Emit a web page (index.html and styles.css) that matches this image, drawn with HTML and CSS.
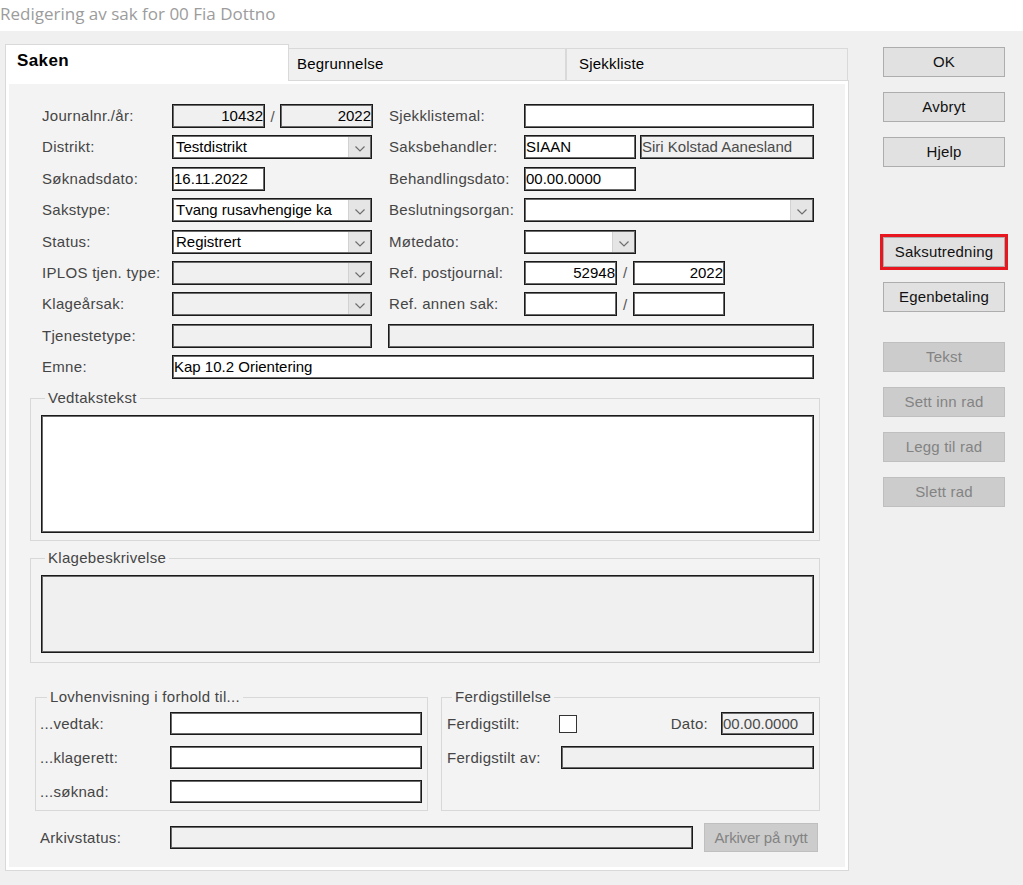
FILE: index.html
```html
<!DOCTYPE html>
<html>
<head>
<meta charset="utf-8">
<link rel="stylesheet" href="styles.css">
</head>
<body>
<div class="titlebar">Redigering av sak for 00 Fia Dottno</div>
<div class="window">
  <div class="tabctl">
    <div class="tabstrip">
      <div class="tab active">Saken</div>
      <div class="tab t2">Begrunnelse</div>
      <div class="tab t3">Sjekkliste</div>
    </div>
    <div class="panel">
      <div class="page">
        <div class="form">
          <div class="lbl">Journalnr./år:</div>
          <div class="cell"><div class="tb ro num w93">10432</div><span class="slash">/</span><div class="tb ro num w93">2022</div></div>
          <div class="lbl lbl2">Sjekklistemal:</div>
          <div class="cell"><div class="tb grow"></div></div>

          <div class="lbl">Distrikt:</div>
          <div class="cell"><div class="cb grow"><div class="v">Testdistrikt</div><div class="arr"><svg width="10" height="6" viewBox="0 0 10 6"><polyline points="0.5,0.5 5,5 9.5,0.5" fill="none" stroke="#6e6e6e" stroke-width="1.2"/></svg></div></div></div>
          <div class="lbl lbl2">Saksbehandler:</div>
          <div class="cell"><div class="tb w112">SIAAN</div><div class="tb ro grow gapl dim">Siri Kolstad Aanesland</div></div>

          <div class="lbl">Søknadsdato:</div>
          <div class="cell"><div class="tb w93">16.11.2022</div></div>
          <div class="lbl lbl2">Behandlingsdato:</div>
          <div class="cell"><div class="tb w112">00.00.0000</div></div>

          <div class="lbl">Sakstype:</div>
          <div class="cell"><div class="cb grow"><div class="v">Tvang rusavhengige ka</div><div class="arr"><svg width="10" height="6" viewBox="0 0 10 6"><polyline points="0.5,0.5 5,5 9.5,0.5" fill="none" stroke="#6e6e6e" stroke-width="1.2"/></svg></div></div></div>
          <div class="lbl lbl2">Beslutningsorgan:</div>
          <div class="cell"><div class="cb grow"><div class="v"></div><div class="arr"><svg width="10" height="6" viewBox="0 0 10 6"><polyline points="0.5,0.5 5,5 9.5,0.5" fill="none" stroke="#6e6e6e" stroke-width="1.2"/></svg></div></div></div>

          <div class="lbl">Status:</div>
          <div class="cell"><div class="cb grow"><div class="v">Registrert</div><div class="arr"><svg width="10" height="6" viewBox="0 0 10 6"><polyline points="0.5,0.5 5,5 9.5,0.5" fill="none" stroke="#6e6e6e" stroke-width="1.2"/></svg></div></div></div>
          <div class="lbl lbl2">Møtedato:</div>
          <div class="cell"><div class="cb w112"><div class="v"></div><div class="arr"><svg width="10" height="6" viewBox="0 0 10 6"><polyline points="0.5,0.5 5,5 9.5,0.5" fill="none" stroke="#6e6e6e" stroke-width="1.2"/></svg></div></div></div>

          <div class="lbl">IPLOS tjen. type:</div>
          <div class="cell"><div class="cb ro grow"><div class="v"></div><div class="arr"><svg width="10" height="6" viewBox="0 0 10 6"><polyline points="0.5,0.5 5,5 9.5,0.5" fill="none" stroke="#6e6e6e" stroke-width="1.2"/></svg></div></div></div>
          <div class="lbl lbl2">Ref. postjournal:</div>
          <div class="cell"><div class="tb num w93">52948</div><span class="slash s16">/</span><div class="tb num w92">2022</div></div>

          <div class="lbl">Klageårsak:</div>
          <div class="cell"><div class="cb ro grow"><div class="v"></div><div class="arr"><svg width="10" height="6" viewBox="0 0 10 6"><polyline points="0.5,0.5 5,5 9.5,0.5" fill="none" stroke="#6e6e6e" stroke-width="1.2"/></svg></div></div></div>
          <div class="lbl lbl2">Ref. annen sak:</div>
          <div class="cell"><div class="tb w93"></div><span class="slash s16">/</span><div class="tb w92"></div></div>

          <div class="lbl">Tjenestetype:</div>
          <div class="cell"><div class="tb ro grow"></div></div>
          <div class="cell span2"><div class="tb ro grow"></div></div>

          <div class="lbl">Emne:</div>
          <div class="cell span3"><div class="tb grow">Kap 10.2 Orientering</div></div>
        </div>

        <fieldset class="fs fs-ved">
          <legend class="lg-ved">Vedtakstekst</legend>
          <div class="tb area h118"></div>
        </fieldset>

        <fieldset class="fs fs-klage">
          <legend class="lg-ved">Klagebeskrivelse</legend>
          <div class="tb ro area h78"></div>
        </fieldset>

        <div class="bottom">
          <fieldset class="fs fs-lov">
            <legend class="lg-lov">Lovhenvisning i forhold til...</legend>
            <div class="lrow"><div class="lbl l130">...vedtak:</div><div class="tb h23 w252"></div></div>
            <div class="lrow"><div class="lbl l130">...klagerett:</div><div class="tb h23 w252"></div></div>
            <div class="lrow"><div class="lbl l130">...søknad:</div><div class="tb h23 w252"></div></div>
          </fieldset>
          <fieldset class="fs fs-ferd">
            <legend class="lg-ferd">Ferdigstillelse</legend>
            <div class="lrow">
              <div class="lbl l112">Ferdigstilt:</div>
              <div class="chk"></div>
              <div class="lbl dato">Dato:</div>
              <div class="tb ro h23 w93 dim">00.00.0000</div>
            </div>
            <div class="lrow">
              <div class="lbl l114">Ferdigstilt av:</div>
              <div class="tb ro h23 grow"></div>
            </div>
          </fieldset>
        </div>

        <div class="arow">
          <div class="lbl l130">Arkivstatus:</div>
          <div class="tb ro h23 w523"></div>
          <div class="btn dis arkiv">Arkiver på nytt</div>
        </div>
      </div>
    </div>
  </div>

  <div class="side">
    <div class="btn">OK</div>
    <div class="btn mt15">Avbryt</div>
    <div class="btn mt15">Hjelp</div>
    <div class="btn mt70 hl">Saksutredning</div>
    <div class="btn mt15">Egenbetaling</div>
    <div class="btn dis mt30">Tekst</div>
    <div class="btn dis mt15">Sett inn rad</div>
    <div class="btn dis mt15">Legg til rad</div>
    <div class="btn dis mt15">Slett rad</div>
  </div>
</div>
</body>
</html>
```

FILE: styles.css
```css
* { box-sizing: border-box; }

body {
  margin: 0;
  width: 1023px;
  height: 885px;
  overflow: hidden;
  background: #f0f0f0;
  font-family: "Liberation Sans", Arial, sans-serif;
  font-size: 15px;
  color: #000;
}

.titlebar {
  height: 31px;
  background: #fff;
  color: #9c9c9c;
  font-family: "Open Sans", "Noto Sans", sans-serif;
  font-size: 17px;
  line-height: 28px;
  padding-left: 0;
  white-space: nowrap;
}

.window {
  display: flex;
  padding: 13px 0 0 5px;
}

.tabctl { width: 844px; }

.tabstrip {
  display: flex;
  align-items: flex-end;
  height: 36px;
  position: relative;
  z-index: 1;
}

.tab {
  height: 32px;
  border: 1px solid #d9d9d9;
  border-bottom: none;
  background: #f0f0f0;
  line-height: 30px;
  padding-left: 8px;
  letter-spacing: 0.2px;
  white-space: nowrap;
}
.tab.active {
  width: 284px;
  height: 37px;
  margin-bottom: -1px;
  background: #fff;
  font-weight: bold;
  font-size: 17px;
  line-height: 32px;
  padding-left: 11px;
  letter-spacing: 0.4px;
}
.tab.t2 { width: 277px; border-left: none; }
.tab.t3 { width: 282px; padding-left: 12px; }

.panel {
  height: 791px;
  border: 1px solid #d9d9d9;
  background: #fff;
  padding: 3px;
}

.page {
  height: 100%;
  background: #f3f3f3;
  padding: 20px 0 0 21px;
}

.form {
  margin-left: 12px;
  display: grid;
  grid-template-columns: 130px 200px 152px 290px;
  grid-auto-rows: 24px;
  row-gap: 7.375px;
}

.lbl {
  color: #454545;
  line-height: 24px;
  white-space: nowrap;
  letter-spacing: 0.3px;
}
.lbl2 { padding-left: 17px; }

.cell { display: flex; align-items: center; }
.span2 { grid-column: span 2; padding-left: 16px; }
.span3 { grid-column: span 3; }

.tb {
  height: 24px;
  border: 1px solid #1a1a1a;
  box-shadow: inset 0 0 0 1px #6a6a6a;
  background: #fff;
  line-height: 22px;
  padding: 0 1px;
  white-space: nowrap;
  overflow: hidden;
  flex: none;
}
.ro { background: #f0f0f0; }
.num { text-align: right; padding-right: 1px; }
.dim { color: #4a4a4a; }
.grow { flex: 1; }
.gapl { margin-left: 4px; }
.w93 { width: 93px; }
.w92 { width: 92px; }
.w112 { width: 112px; }
.w252 { width: 252px; }
.w523 { width: 523px; }
.h23 { height: 23px; line-height: 21px; }

.slash {
  width: 15px;
  text-align: center;
  color: #555;
  flex: none;
}
.slash.s16 { width: 16px; }

.cb {
  display: flex;
  height: 24px;
  border: 1px solid #1a1a1a;
  box-shadow: inset 0 0 0 1px #6a6a6a;
  background: #fff;
}
.cb.ro { background: #f0f0f0; }
.cb .v {
  flex: 1;
  padding-left: 3px;
  line-height: 22px;
  white-space: nowrap;
  overflow: hidden;
}
.cb .arr {
  width: 22px;
  margin: 1px;
  background: #e5e5e5;
  border-left: 1px solid #d2d2d2;
  display: flex;
  justify-content: center;
  align-items: flex-end;
  padding-bottom: 5px;
  flex: none;
}
.cb .arr svg { display: block; }

.fs {
  margin: 0;
  border: 1px solid #d8d8d8;
  min-width: 0;
}
.fs legend {
  padding: 0 3px;
  color: #454545;
  line-height: 18px;
  font-size: 15px;
  letter-spacing: 0.3px;
}
.lg-ved { margin-left: 4px; }
.lg-lov { margin-left: 7px; }
.lg-ferd { margin-left: 5px; }

.fs-ved {
  margin-top: 10px;
  width: 790px;
  padding: 8px 5px 7px 10px;
}
.fs-klage {
  margin-top: 8px;
  width: 790px;
  padding: 8px 5px 9px 10px;
}
.area { width: 100%; }
.h118 { height: 118px; }
.h78 { height: 78px; }

.bottom {
  display: flex;
  gap: 13px;
  margin: 25px 0 0 5px;
}
.fs-lov {
  width: 393px;
  padding: 6px 5px 7px 4px;
}
.fs-ferd {
  width: 379px;
  padding: 6px 5px 7px 5px;
}
.lrow {
  display: flex;
  align-items: center;
  height: 23px;
}
.lrow + .lrow { margin-top: 11px; }
.l130 { width: 130px; flex: none; }
.l112 { width: 112px; flex: none; }
.l114 { width: 114px; flex: none; }

.chk {
  width: 18px;
  height: 18px;
  border: 1px solid #333;
  background: #fff;
  flex: none;
}
.dato {
  margin-left: auto;
  margin-right: 13px;
}

.arow {
  display: flex;
  align-items: center;
  margin: 12px 0 0 10px;
}

.side {
  margin-left: 34px;
  padding-top: 3px;
  width: 122px;
  display: flex;
  flex-direction: column;
}

.btn {
  height: 30px;
  border: 1px solid #adadad;
  background: #e1e1e1;
  text-align: center;
  line-height: 28px;
  letter-spacing: 0.2px;
  white-space: nowrap;
  color: #111;
}
.btn.dis {
  background: #cccccc;
  border-color: #bfbfbf;
  color: #838383;
}
.btn.hl { outline: 3px solid #e8161f; }
.mt15 { margin-top: 15px; }
.mt30 { margin-top: 30px; }
.mt70 { margin-top: 70px; }

.arkiv {
  width: 114px;
  height: 29px;
  line-height: 27px;
  margin-left: 11px;
  letter-spacing: -0.2px;
}
```
